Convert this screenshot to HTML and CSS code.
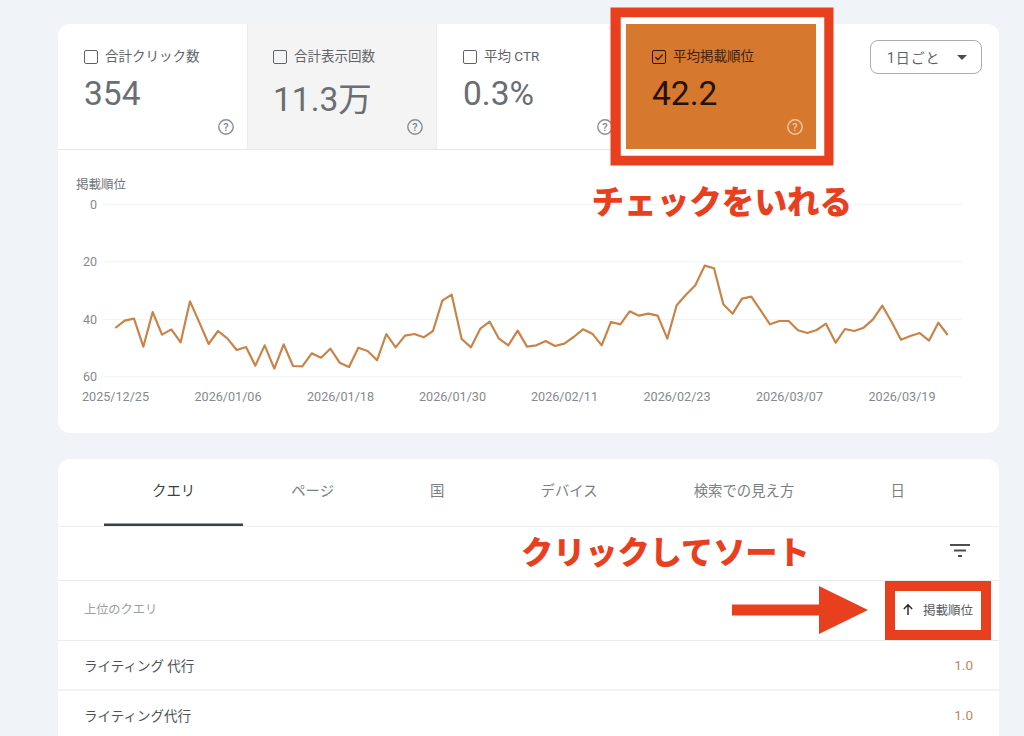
FILE: index.html
```html
<!DOCTYPE html>
<html lang="ja">
<head>
<meta charset="utf-8">
<title>検索パフォーマンス</title>
<link rel="stylesheet" href="styles.css">
</head>
<body>
<main class="page">
  <section class="card card-chart">
    <div class="tiles">
      <div class="tile tile-first">
        <div class="tile-label"><span class="check"></span>合計クリック数</div>
        <div class="tile-value">354</div>
        <svg class="help" viewBox="0 0 16 16"><circle cx="8" cy="8" r="7.2"/><text x="8" y="11.6">?</text></svg>
      </div>
      <div class="tile tile-hover">
        <div class="tile-label"><span class="check"></span>合計表示回数</div>
        <div class="tile-value tile-value-low">11.3万</div>
        <svg class="help" viewBox="0 0 16 16"><circle cx="8" cy="8" r="7.2"/><text x="8" y="11.6">?</text></svg>
      </div>
      <div class="tile">
        <div class="tile-label"><span class="check"></span>平均 CTR</div>
        <div class="tile-value">0.3%</div>
        <svg class="help" viewBox="0 0 16 16"><circle cx="8" cy="8" r="7.2"/><text x="8" y="11.6">?</text></svg>
      </div>
      <div class="tile tile-active">
        <div class="tile-label"><span class="check check-on"><svg viewBox="0 0 12 12"><path d="M2.4 6.2 L5 8.6 L9.6 3.6"/></svg></span>平均掲載順位</div>
        <div class="tile-value">42.2</div>
        <svg class="help" viewBox="0 0 16 16"><circle cx="8" cy="8" r="7.2"/><text x="8" y="11.6">?</text></svg>
      </div>
      <div class="tile-side">
        <button class="range"><span>1日ごと</span><i class="caret"></i></button>
      </div>
    </div>
    <svg class="chart" viewBox="58 150 941 283">
      <text class="axis-title" x="76" y="189">掲載順位</text>
      <g class="grid">
        <line x1="103" y1="204.3" x2="962" y2="204.3"/>
        <line x1="103" y1="261.8" x2="962" y2="261.8"/>
        <line x1="103" y1="319.3" x2="962" y2="319.3"/>
        <line x1="103" y1="376.8" x2="962" y2="376.8"/>
      </g>
      <g class="ylabels">
        <text x="97" y="208.5">0</text>
        <text x="97" y="266">20</text>
        <text x="97" y="323.5">40</text>
        <text x="97" y="381">60</text>
      </g>
      <g class="xlabels">
        <text x="82" y="401">2025/12/25</text>
        <text x="194.5" y="401">2026/01/06</text>
        <text x="307" y="401">2026/01/18</text>
        <text x="419" y="401">2026/01/30</text>
        <text x="531" y="401">2026/02/11</text>
        <text x="643.5" y="401">2026/02/23</text>
        <text x="756" y="401">2026/03/07</text>
        <text x="868.5" y="401">2026/03/19</text>
      </g>
      <g transform="translate(60 190) scale(0.33333)">
        <polyline class="line" points="166,414 194,392 222,386 250,470 278,366 306,434 334,418 362,457 390,334 418,397 446,462 474,423 502,445 530,480 558,471 586,527 614,466 643,536 671,463 699,528 727,529 755,490 783,503 811,476 839,518 867,531 895,473 923,483 951,511 979,432 1007,472 1035,437 1063,432 1091,442 1119,423 1147,332 1175,314 1205,447 1233,472 1261,416 1289,395 1317,446 1345,466 1373,422 1401,470 1429,466 1457,453 1485,468 1513,461 1541,441 1569,418 1597,431 1625,466 1653,396 1681,403 1709,364 1737,377 1765,371 1793,377 1822,446 1850,346 1878,314 1906,286 1934,227 1962,235 1990,343 2018,371 2046,326 2074,320 2102,361 2130,403 2158,393 2186,393 2214,421 2242,429 2270,420 2298,401 2327,458 2355,417 2383,423 2411,413 2439,388 2467,347 2495,396 2523,449 2551,438 2579,429 2607,452 2635,398 2663,435"/>
      </g>
    </svg>
    <div class="note note-check">チェックをいれる</div>
  </section>

  <section class="card card-table">
    <nav class="tabs">
      <a class="tab tab-on">クエリ</a>
      <a class="tab">ページ</a>
      <a class="tab">国</a>
      <a class="tab">デバイス</a>
      <a class="tab">検索での見え方</a>
      <a class="tab">日</a>
    </nav>
    <div class="filter-row">
      <svg class="filter" viewBox="0 0 20 13"><path d="M0 1h20M4 6.5h12M8 12h4"/></svg>
    </div>
    <div class="row row-head">
      <span>上位のクエリ</span>
      <span class="sort"><svg viewBox="0 0 12 14"><path d="M6 13V2M1.5 6.5 6 2l4.5 4.5"/></svg>掲載順位</span>
    </div>
    <div class="row"><span>ライティング 代行</span><span class="num">1.0</span></div>
    <div class="row"><span>ライティング代行</span><span class="num">1.0</span></div>
    <div class="note note-sort">クリックしてソート</div>
    <svg class="arrow" viewBox="0 0 136 48"><path d="M0 18.5H87V0L136 24 87 48V29.5H0Z"/></svg>
  </section>
</main>
</body>
</html>
```
FILE: styles.css
```css
* { box-sizing: border-box; }
html, body { margin: 0; height: 736px; overflow: hidden; }
body {
  background: #f0f4f9;
  font-family: Roboto, "Noto Sans CJK JP", sans-serif;
  color: #5f6368;
}
.page {
  display: flex;
  flex-direction: column;
  gap: 26px;
  padding: 24px 25px 0 58px;
}
.card {
  position: relative;
  background: #fff;
  border-radius: 12px;
}
.card-chart { height: 409px; }
.card-table { height: 300px; border-radius: 12px 12px 0 0; }

/* metric tiles */
.tiles {
  display: grid;
  grid-template-columns: 189px 190px 189px 190px 1fr;
  height: 126px;
}
.tile {
  position: relative;
  display: flex;
  flex-direction: column;
  padding: 23px 13px 0 26px;
  border-bottom: 1px solid #e6e8ea;
}
.tile-first { border-top-left-radius: 12px; }
.tile-hover {
  background: #f4f4f4;
  border-left: 1px solid #ebedef;
  border-right: 1px solid #ebedef;
  padding-left: 25px;
}
.tile-active {
  z-index: 1;
  height: 125px;
  background: #d6782e;
  color: #3a2010;
  border-bottom: 0;
  box-shadow: 1.5px 0 0 6.75px #fff, 1px 0 0 16.5px #e8401f;
}
.tile-label {
  display: flex;
  align-items: center;
  gap: 7px;
  height: 18px;
  font-size: 13.5px;
  line-height: 18px;
  white-space: nowrap;
}
.check {
  flex: none;
  width: 14px;
  height: 14px;
  margin-top: 2px;
  border: 1.5px solid #5f6368;
  border-radius: 2px;
}
.check-on { border-color: #2a1608; }
.check-on svg { display: block; width: 100%; height: 100%; }
.check-on path { fill: none; stroke: #2a1608; stroke-width: 1.4; }
.tile-value {
  margin-top: 9px;
  font-size: 33.5px;
  line-height: 40px;
  white-space: nowrap;
  color: #6a6e72;
}
.tile-value-low { margin-top: 15px; }
.tile-active .tile-value { color: #241208; }
.help {
  position: absolute;
  right: 13px;
  bottom: 14px;
  width: 16px;
  height: 16px;
}
.help circle { fill: none; stroke: #8a8e92; stroke-width: 1.4; }
.help text {
  fill: #7f8387;
  font-size: 11px;
  font-weight: 500;
  text-anchor: middle;
}
.tile-active .help circle { stroke: #f2c9a0; }
.tile-active .help text { fill: #f2c9a0; }
.tile-side {
  display: flex;
  justify-content: flex-end;
  padding: 16px 17px 0 0;
}
.range {
  display: flex;
  align-items: center;
  justify-content: space-between;
  width: 112px;
  height: 34px;
  padding: 0 14px 0 16px;
  background: #fff;
  border: 1px solid #a9adb1;
  border-radius: 8px;
  font: 400 14px Roboto, "Noto Sans CJK JP", sans-serif;
  letter-spacing: 0.9px;
  color: #5f6368;
}
.caret {
  width: 0;
  height: 0;
  border-left: 5px solid transparent;
  border-right: 5px solid transparent;
  border-top: 5px solid #4a4e52;
}

/* chart */
.chart { display: block; width: 941px; height: 283px; }
.axis-title { font-size: 12.5px; fill: #6f7377; }
.grid line { stroke: #f1f2f4; stroke-width: 1; }
.ylabels text { font-size: 12.5px; fill: #85898d; text-anchor: end; }
.xlabels text { font-size: 12.6px; fill: #85898d; }
.line {
  fill: none;
  stroke: #c98347;
  stroke-width: 6.5;
  stroke-linejoin: round;
}

/* annotations */
.note {
  position: absolute;
  color: #e8401f;
  font-weight: 900;
  white-space: nowrap;
}
.note-check { left: 533.5px; top: 157px; font-size: 32.6px; line-height: 44px; }
.note-sort { left: 463px; top: 72px; font-size: 32.2px; line-height: 44px; }
.arrow {
  position: absolute;
  left: 674px;
  top: 127px;
  width: 136px;
  height: 48px;
  fill: #e8401f;
}

/* table */
.tabs {
  display: flex;
  height: 68px;
  padding-left: 46px;
  border-bottom: 1px solid #eceef0;
}
.tab {
  display: flex;
  align-items: center;
  justify-content: center;
  height: 67px;
  padding: 0 48px 6px;
  font-size: 14.4px;
  color: #7b7f83;
}
.tab-on {
  color: #3c4043;
  box-shadow: inset 0 -2.5px 0 #3c4043;
}
.filter-row {
  display: flex;
  align-items: center;
  justify-content: flex-end;
  height: 54px;
  padding: 0 29px 6px 0;
  border-bottom: 1px solid #e8eaec;
}
.filter { width: 20px; height: 13px; }
.filter path { fill: none; stroke: #4a4e52; stroke-width: 2; }
.row {
  display: flex;
  align-items: center;
  justify-content: space-between;
  height: 50px;
  padding: 0 26px 0 26px;
  border-bottom: 2px solid #f1f2f4;
  font-size: 13.5px;
  color: #4f5357;
}
.row-head {
  position: relative;
  height: 60px;
  padding-bottom: 3px;
  border-bottom: 1px solid #e8eaec;
  font-size: 12.2px;
  color: #9a9ea2;
}
.sort {
  position: relative;
  display: flex;
  align-items: center;
  gap: 9px;
  font-size: 12.5px;
  color: #55595d;
}
.sort svg { width: 12px; height: 13px; }
.sort path { fill: none; stroke: #222; stroke-width: 1.5; }
.sort::after {
  content: "";
  position: absolute;
  left: -17px;
  right: -18px;
  top: -19px;
  bottom: -21px;
  border: 10px solid #e8401f;
}
.num { color: #bb8a58; font-size: 13.5px; }
```
